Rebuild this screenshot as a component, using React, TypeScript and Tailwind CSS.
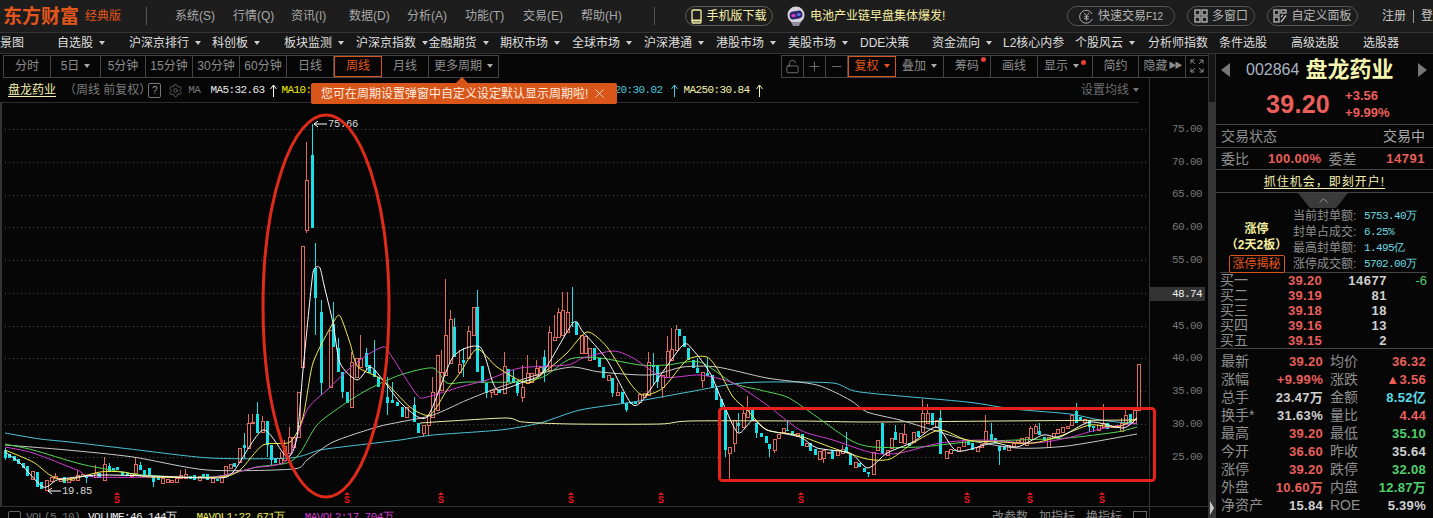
import React from "react";
import { LockOpen, Plus, Minus, Settings, ChevronUp, X } from "lucide-react";

type Candle = { x: number; t: number; b: number; h: number; l: number; up: boolean };

const r = (x: number, t: number, b: number, h = t, l = b): Candle => ({ x, t, b, h, l, up: true });
const c = (x: number, t: number, b: number, h = t, l = b): Candle => ({ x, t, b, h, l, up: false });

const candles: Candle[] = [
    c(5, 450, 458, 448, 460), c(9, 454, 458), c(14, 456, 461), c(18, 459, 464), c(23, 463, 468), c(27, 466, 476),
    r(32, 471, 479), c(37, 472, 487), c(41, 482, 489), r(46, 480, 490), r(51, 477, 481), r(55, 476, 478, 473),
    r(60, 478, 481), c(64, 477, 483), r(68, 478, 482), r(72, 478, 480), r(77, 475, 480, 470), r(82, 474, 476),
    c(86, 475, 478, 475, 483), c(91, 475, 477), r(95, 473, 477, 465), c(99, 473, 478), r(104, 464, 480, 457),
    c(109, 466, 472, 463), c(113, 468, 470), c(117, 467, 470), c(122, 472, 475), c(127, 473, 476), r(131, 473, 476),
    r(135, 464, 473, 457), c(140, 465, 470, 462), c(144, 470, 475), c(149, 468, 475), c(153, 476, 482, 476, 487),
    c(158, 477, 480), r(162, 478, 483), r(167, 479, 482), r(171, 480, 482), r(176, 478, 482), r(180, 475, 478, 470),
    r(185, 474, 478, 469), c(190, 476, 479), c(194, 475, 480), r(199, 476, 480), c(203, 474, 477), c(207, 474, 480),
    r(212, 478, 482), c(217, 479, 481), r(221, 477, 482),
    r(225, 466, 475), r(230, 464, 468), c(234, 463, 467), r(239, 448, 462), c(244, 445, 448, 433, 458),
    r(248, 423, 448, 414), r(252, 422, 423, 414), c(257, 414, 433, 402), r(262, 421, 432, 416), c(267, 421, 445, 421, 457),
    c(271, 445, 460, 445, 465), c(275, 458, 463), r(280, 458, 463, 452), r(284, 446, 460, 440), r(289, 437, 453, 427),
    r(293, 437, 447), r(298, 392, 437), r(302, 246, 367), r(306, 180, 230, 142, 233), c(312, 155, 228, 124),
    c(315, 268, 298, 243, 335), c(321, 312, 383, 300, 395), r(330, 330, 387), c(333, 324, 347, 302), c(338, 348, 372, 338),
    c(342, 372, 392, 372, 398), c(347, 392, 403), r(351, 362, 407, 352), r(356, 358, 377), r(360, 358, 367, 335),
    c(366, 353, 367, 348, 370), c(369, 365, 373), c(374, 370, 377, 340), c(378, 377, 387), c(387, 397, 403, 377, 415),
    c(392, 400, 403, 382), c(397, 402, 406), c(402, 407, 417), r(406, 407, 417), c(414, 405, 422, 397),
    c(418, 423, 433), r(423, 425, 433, 425, 437), r(428, 415, 425, 415, 436), r(432, 392, 417, 377), r(437, 355, 410),
    r(441, 372, 390, 350), r(445, 335, 375, 279), r(450, 319, 363, 310), c(454, 327, 357, 318), r(459, 364, 372, 350),
    c(463, 360, 363, 348, 377), r(468, 331, 358, 326), r(473, 307, 335), c(477, 307, 372, 290), c(482, 366, 383),
    c(486, 383, 393, 383, 398), r(491, 390, 392, 390, 398), r(495, 389, 394), c(499, 390, 393), r(504, 366, 393, 352),
    c(508, 369, 382), c(513, 378, 383, 370), c(517, 382, 393, 382, 396), r(522, 387, 397, 365, 402), r(527, 373, 383, 355),
    r(531, 373, 382), r(536, 368, 375, 360), r(540, 367, 372), c(544, 357, 373, 350, 382), r(549, 332, 370, 326),
    r(554, 337, 340, 315), r(558, 312, 337, 308), r(562, 310, 335, 292), r(567, 312, 332, 292), c(572, 322, 323, 287, 327),
    c(576, 322, 335), r(581, 335, 353), r(585, 336, 353), r(589, 348, 360), c(594, 348, 360), c(599, 358, 367),
    c(603, 367, 378), r(608, 375, 380), c(612, 378, 393, 378, 397), r(617, 392, 395, 383), c(622, 392, 403),
    c(626, 403, 410, 403, 412), c(631, 402, 404), c(635, 402, 404), r(639, 394, 402), r(644, 393, 397),
    r(648, 362, 395, 352), c(653, 365, 367, 353, 385), c(657, 365, 382, 365, 388), r(662, 375, 387, 375, 398),
    r(667, 351, 377, 336), r(671, 349, 360, 328), r(676, 329, 350, 325), c(679, 329, 336), c(684, 336, 347),
    c(688, 348, 360), c(693, 360, 368), c(697, 368, 373, 358), r(702, 372, 380, 372, 388), c(707, 373, 376, 358),
    c(712, 375, 388), c(716, 388, 400), c(721, 399, 407), c(725, 410, 450, 410, 457), r(729, 447, 453, 447, 480),
    r(734, 420, 443, 420, 452), c(738, 423, 426, 413, 432), r(743, 413, 427, 410), r(747, 410, 417, 396), c(752, 410, 420),
    c(756, 423, 433, 423, 438), c(761, 433, 437), c(766, 436, 443), c(769, 444, 449, 444, 457), r(774, 439, 450, 439, 453),
    r(778, 434, 438), r(783, 428, 432), c(787, 430, 431, 420), c(792, 431, 435), r(797, 433, 436), c(802, 434, 446),
    r(806, 443, 446), c(810, 443, 451), c(815, 449, 455), r(819, 451, 459), r(823, 450, 458, 450, 463), r(828, 452, 453),
    c(832, 450, 459), r(837, 450, 455), r(842, 449, 453, 445), c(846, 447, 453, 432), c(850, 454, 465), r(855, 462, 467),
    c(859, 463, 467), c(864, 468, 472), c(868, 472, 474, 472, 477), r(873, 452, 474), r(877, 440, 450), c(882, 423, 454),
    r(887, 450, 455), r(891, 438, 448), c(895, 432, 440, 425), r(900, 433, 442), r(904, 434, 443, 424), c(909, 443, 446),
    r(913, 432, 442), c(918, 431, 437), r(922, 413, 432, 399), r(927, 413, 423, 404), c(932, 413, 425), r(936, 420, 427),
    c(940, 418, 454, 410), r(946, 451, 458), r(950, 449, 453), c(954, 450, 451), r(958, 447, 451), r(963, 440, 446),
    c(968, 441, 445), c(972, 443, 450), r(977, 447, 451), r(981, 444, 447), r(985, 431, 442, 415), c(991, 434, 440, 423),
    c(995, 438, 443), c(999, 446, 451, 446, 465), c(1004, 446, 450), r(1008, 445, 450), r(1013, 443, 446), r(1017, 440, 443),
    r(1021, 438, 443), r(1026, 437, 445), r(1030, 428, 439, 426), r(1035, 426, 433, 424), c(1039, 431, 435, 423),
    c(1044, 437, 440), r(1048, 437, 447), r(1053, 433, 437), r(1057, 429, 433), r(1062, 427, 432), r(1067, 426, 428),
    r(1071, 415, 425), c(1076, 411, 423, 403), c(1080, 417, 420), r(1084, 419, 422), c(1089, 420, 427, 420, 432),
    c(1093, 426, 428, 426, 432), r(1098, 425, 430), r(1103, 423, 427, 404), c(1107, 423, 429), r(1112, 426, 427),
    r(1116, 425, 427), r(1121, 423, 431, 418), r(1125, 415, 423, 409), c(1130, 414, 423), r(1134, 410, 423), r(1138, 364, 410),
];

const ma5: [number, number][] = [
    [5, 452], [20, 463], [43, 487], [57, 480], [77, 477], [100, 475], [150, 476], [217, 478], [233, 472], [263, 430],
    [287, 457], [297, 437], [303, 370], [312, 280], [315, 268], [320, 268], [324, 285], [333, 323], [340, 363], [357, 380], [370, 367], [383, 380],
    [403, 405], [427, 417], [453, 357], [480, 347], [493, 383], [500, 390], [523, 382], [543, 372], [573, 323], [583, 332],
    [607, 360], [630, 402], [640, 403], [657, 380], [683, 345], [693, 350], [710, 373], [723, 403], [738, 433], [753, 420],
    [767, 430], [800, 437], [817, 448], [850, 453], [868, 468], [887, 453], [913, 442], [937, 427], [957, 451], [993, 443],
    [1017, 447], [1043, 435], [1060, 437], [1090, 422], [1123, 428], [1137, 418],
];
const ma10: [number, number][] = [
    [5, 450], [33, 462], [50, 475], [67, 480], [100, 472], [123, 472], [150, 477], [220, 477], [240, 470], [263, 445],
    [290, 442], [303, 417], [313, 363], [333, 323], [340, 316], [350, 343], [358, 367], [383, 380], [410, 407], [430, 415],
    [447, 390], [460, 373], [477, 349], [497, 367], [527, 383], [547, 370], [567, 353], [587, 332], [607, 347], [630, 383],
    [643, 395], [663, 388], [687, 360], [707, 357], [720, 373], [733, 397], [747, 410], [767, 430], [797, 435], [833, 448],
    [867, 459], [890, 459], [913, 443], [940, 430], [967, 440], [1000, 442], [1033, 443], [1060, 436], [1090, 425], [1117, 427],
    [1137, 418],
];
const ma20: [number, number][] = [
    [5, 447], [33, 453], [77, 470], [93, 477], [167, 477], [213, 477], [253, 468], [287, 460], [307, 410], [327, 390],
    [357, 362], [383, 347], [392, 357], [417, 395], [427, 397], [460, 387], [487, 380], [520, 368], [567, 365], [583, 358],
    [613, 351], [633, 358], [663, 377], [700, 375], [733, 383], [767, 405], [800, 430], [833, 440], [873, 453], [900, 453],
    [940, 443], [983, 440], [1033, 443], [1067, 438], [1100, 429], [1137, 423],
];
const ma30: [number, number][] = [
    [5, 444], [33, 450], [77, 463], [100, 468], [143, 475], [213, 477], [257, 467], [287, 463], [300, 453], [317, 425],
    [340, 407], [367, 390], [400, 375], [433, 368], [447, 383], [467, 382], [513, 382], [543, 377], [570, 359], [600, 358],
    [640, 365], [667, 365], [700, 362], [733, 383], [760, 390], [787, 397], [810, 412], [850, 440], [873, 447], [920, 447],
    [967, 442], [1017, 440], [1067, 438], [1117, 432], [1137, 427],
];
const ma60: [number, number][] = [
    [5, 445], [67, 450], [133, 457], [207, 470], [293, 469], [307, 460], [333, 442], [377, 427], [400, 422], [433, 415],
    [467, 400], [500, 387], [543, 373], [573, 367], [600, 372], [650, 375], [683, 367], [717, 367], [767, 378], [817, 385],
    [850, 400], [867, 412], [900, 420], [933, 430], [967, 440], [1017, 448], [1067, 446], [1137, 434],
];
const ma120: [number, number][] = [
    [420, 423], [450, 421], [507, 418], [523, 422], [573, 424], [660, 424], [690, 421], [800, 421],
    [867, 422], [1000, 421], [1137, 420],
];
const ma250: [number, number][] = [
    [5, 433], [40, 439], [70, 442], [130, 449], [210, 458], [290, 458], [320, 450], [350, 446], [400, 440], [433, 435],
    [500, 430], [540, 423], [580, 410], [633, 402], [683, 393], [733, 384], [767, 382], [833, 383], [860, 392], [967, 402],
    [1013, 409], [1070, 414], [1100, 420], [1137, 424],
];

// catmull-rom through the points, the MA lines in the picture are rounded
const smooth = (pts: [number, number][]) => {
    let d = `M${pts[0][0]} ${pts[0][1]}`;
    for (let i = 0; i < pts.length - 1; i++) {
        const p0 = pts[Math.max(i - 1, 0)];
        const p1 = pts[i];
        const p2 = pts[i + 1];
        const p3 = pts[Math.min(i + 2, pts.length - 1)];
        const c1 = [p1[0] + (p2[0] - p0[0]) / 8, p1[1] + (p2[1] - p0[1]) / 8];
        const c2 = [p2[0] - (p3[0] - p1[0]) / 8, p2[1] - (p3[1] - p1[1]) / 8];
        d += ` C${c1[0].toFixed(1)} ${c1[1].toFixed(1)} ${c2[0].toFixed(1)} ${c2[1].toFixed(1)} ${p2[0]} ${p2[1]}`;
    }
    return d;
};

const grid = [129, 162, 195, 227, 260, 293, 326, 358, 391, 424, 457];
const axis = ["75.00", "70.00", "65.00", "60.00", "55.00", "", "45.00", "40.00", "35.00", "30.00", "25.00"];
const signals = [117, 347, 441, 571, 661, 801, 967, 1030, 1102];

const mono = "font-['Liberation_Mono',monospace]";
const cjk = "font-['Liberation_Sans','Noto_Sans_CJK_SC',sans-serif]";
const arial = "font-['Liberation_Sans','Noto_Sans_CJK_SC',sans-serif]";

const Caret = ({ color = "border-t-[#aaaaaa]" }: { color?: string }) => (
    <span className={`inline-block w-0 h-0 border-x-[3px] border-t-[4px] border-x-transparent ${color}`} />
);

const navItems: [string, boolean, string][] = [
    ["自选股", true, "w-[72px]"], ["沪深京排行", true, "w-[83px]"], ["科创板", true, "w-[72px]"], ["板块监测", true, "w-[72px]"],
    ["沪深京指数", true, "w-[72.5px]"], ["金融期货", true, "w-[71.5px]"], ["期权市场", true, "w-[72px]"], ["全球市场", true, "w-[72px]"],
    ["沪深港通", true, "w-[72px]"], ["港股市场", true, "w-[72px]"], ["美股市场", true, "w-[72px]"], ["DDE决策", false, "w-[72px]"],
    ["资金流向", true, "w-[71px]"], ["L2核心内参", false, "w-[72px]"], ["个股风云", true, "w-[73px]"], ["分析师指数", false, "w-[71px]"],
    ["条件选股", false, "w-[72px]"], ["高级选股", false, "w-[72px]"], ["选股器", false, "w-[70px]"],
];

const menus = ["系统(S)", "行情(Q)", "资讯(I)", "数据(D)", "分析(A)", "功能(T)", "交易(E)", "帮助(H)"];

const Pill = ({ w, children }: { w: string; children: React.ReactNode }) => (
    <div className={`${w} shrink-0 h-[20px] flex items-center justify-center gap-1 rounded-full border border-[#555555] text-[#b5b5b5] text-[12px]`}>
        {children}
    </div>
);

const TopBar = () => (
    <div className="h-[32px] flex items-center bg-[#1d1d1d] pl-[3px] text-[12px] text-[#a8a8a8] shrink-0 overflow-hidden">
        <div className="w-[82px] shrink-0 text-[19px] font-bold text-[#e2561c] leading-none whitespace-nowrap">东方财富</div>
        <div className="w-[61px] shrink-0 text-[#e2561c] text-[12px] whitespace-nowrap">经典版</div>
        <div className="w-px h-[18px] shrink-0 bg-[#555555]" />
        <div className="flex shrink-0 ml-[28px]">
            {menus.map((m) => (
                <div key={m} className="w-[58px] whitespace-nowrap">{m}</div>
            ))}
        </div>
        <div className="w-px h-[18px] shrink-0 bg-[#555555] ml-[15px]" />
        <div className="ml-[30px] w-[88px] shrink-0 h-[20px] flex items-center justify-center gap-1 rounded-full border border-[#5e5e50] text-[#f5efa8]">
            <svg width="11" height="15" viewBox="0 0 11 15" fill="none" stroke="#f5efa8" strokeWidth="1.3">
                <rect x="1" y="1" width="9" height="13" rx="1" />
                <path d="M1 11.5 H10" strokeWidth="2" />
            </svg>
            <span className="whitespace-nowrap">手机版下载</span>
        </div>
        <svg className="ml-[13px] shrink-0" width="20" height="20" viewBox="0 0 20 20">
            <circle cx="10" cy="9" r="8.5" fill="#d6d2dc" />
            <rect x="3.5" y="5" width="13" height="8" rx="4" fill="#2c2470" transform="rotate(-10 10 9)" />
            <ellipse cx="7.5" cy="9.6" rx="2.2" ry="1.6" fill="#d83fb8" />
            <ellipse cx="12.8" cy="8.6" rx="1.9" ry="1.4" fill="#5a7cf0" />
            <path d="M5 16 L15 16 L13 20 L7 20 Z" fill="#8f8a9c" />
        </svg>
        <div className="ml-[4px] w-[257px] shrink-0 text-[#f5eda0] whitespace-nowrap">电池产业链早盘集体爆发!</div>
        <Pill w="w-[108px]">
            <svg width="15" height="15" viewBox="0 0 15 15" fill="none" stroke="#aaaaaa">
                <path d="M13 5 A6.5 6.5 0 1 0 13.2 10" />
                <path d="M5 4 L7.5 7 L10 4 M7.5 7 V11.5 M5.2 7.8 H9.8 M5.2 9.8 H9.8" />
            </svg>
            <span className="whitespace-nowrap">快速交易<span className="text-[10px]">F12</span></span>
        </Pill>
        <div className="ml-[12px] shrink-0">
            <Pill w="w-[68px]">
                <svg width="14" height="14" viewBox="0 0 14 14" fill="none" stroke="#bbbbbb" strokeWidth="1.3">
                    <rect x="1" y="1" width="5" height="5" />
                    <rect x="8" y="1" width="5" height="5" />
                    <rect x="1" y="8" width="5" height="5" />
                    <rect x="8" y="8" width="5" height="5" />
                </svg>
                <span className="whitespace-nowrap">多窗口</span>
            </Pill>
        </div>
        <div className="ml-[12px] shrink-0">
            <Pill w="w-[91px]">
                <svg width="14" height="14" viewBox="0 0 14 14" fill="none" stroke="#bbbbbb" strokeWidth="1.3">
                    <rect x="1" y="1" width="5" height="5" />
                    <rect x="8" y="1" width="5" height="3" />
                    <rect x="1" y="8" width="5" height="5" />
                    <path d="M8 13 L13 6.5 M8 8 L10 6" />
                </svg>
                <span className="whitespace-nowrap">自定义面板</span>
            </Pill>
        </div>
        <div className="ml-[24px] shrink-0 text-[#c8c8c8] whitespace-nowrap">注册</div>
        <div className="ml-[7px] shrink-0 w-px h-[13px] bg-[#999999]" />
        <div className="ml-[7px] shrink-0 text-[#c8c8c8] whitespace-nowrap">登录</div>
    </div>
);

const NavBar = () => (
    <div className="h-[22px] flex items-center bg-[#171717] border-y border-[#333333] text-[12px] text-[#dddddd] shrink-0 overflow-hidden">
        <div className="w-[57px] shrink-0 whitespace-nowrap">景图</div>
        {navItems.map(([label, caret, w]) => (
            <div key={label} className={`${w} shrink-0 flex items-center gap-[6px] whitespace-nowrap`}>
                <span>{label}</span>
                {caret && <Caret color="border-t-[#cccccc]" />}
            </div>
        ))}
    </div>
);

const periods: [string, string, boolean?][] = [
    ["分时", "w-[47px]"], ["5日", "w-[50px]", true], ["5分钟", "w-[45px]"], ["15分钟", "w-[47px]"], ["30分钟", "w-[47px]"],
    ["60分钟", "w-[47px]"], ["日线", "w-[47px]"],
];

const Cell = ({ w, children, active }: { w: string; children?: React.ReactNode; active?: boolean }) => (
    <div
        className={`${w} h-full shrink-0 flex items-center justify-center gap-[5px] whitespace-nowrap border-r ${
            active ? "border border-[#d9561a] text-[#e2561c]" : "border-[#444444]"
        }`}
    >
        {children}
    </div>
);

const ToolRow = () => (
    <div className="h-[24px] flex items-center pl-[3px] text-[12px] text-[#8d8d8d] shrink-0">
        <div className="flex h-[23px] border border-[#444444]">
            {periods.map(([label, w, caret]) => (
                <Cell key={label} w={w}>
                    {label}
                    {caret && <Caret />}
                </Cell>
            ))}
            <Cell w="w-[48px]" active>周线</Cell>
            <Cell w="w-[47px]">月线</Cell>
            <div className="w-[69px] flex items-center justify-center gap-[5px] whitespace-nowrap">
                更多周期
                <Caret />
            </div>
        </div>
        <div className="flex h-[23px] border border-[#444444] ml-[282px]">
            <Cell w="w-[22px]"><LockOpen size={15} strokeWidth={1.2} /></Cell>
            <Cell w="w-[22px]"><Plus size={15} strokeWidth={1.2} /></Cell>
            <Cell w="w-[22px]"><Minus size={15} strokeWidth={1.2} /></Cell>
            <Cell w="w-[48px]" active>复权<Caret color="border-t-[#e2561c]" /></Cell>
            <Cell w="w-[48px]">叠加<Caret /></Cell>
            <Cell w="w-[47px]">
                <span className="relative">
                    筹码
                    <span className="absolute -right-[7px] top-[0px] w-[5px] h-[5px] rounded-full bg-[#e8403a]" />
                </span>
            </Cell>
            <Cell w="w-[47px]">画线</Cell>
            <Cell w="w-[55px]">
                显示
                <Caret />
                <span className="w-[5px] h-[5px] -mt-[8px] -ml-[3px] rounded-full bg-[#e8403a]" />
            </Cell>
            <Cell w="w-[46px]">简约</Cell>
            <Cell w="w-[47px]">
                隐藏
                <span className="text-[8px] -ml-[4px] tracking-[-2px]">▶▶</span>
            </Cell>
            <div className="w-[22px] flex items-center justify-center">
                <svg width="14" height="14" viewBox="0 0 14 14" fill="none" stroke="#8d8d8d">
                    <path d="M1 4.5 V1 H4.5 M9.5 1 H13 V4.5 M13 9.5 V13 H9.5 M4.5 13 H1 V9.5 M1 1 L5 5 M13 1 L9 5 M13 13 L9 9 M1 13 L5 9" />
                </svg>
            </div>
        </div>
    </div>
);

const UpArrow = ({ color }: { color: string }) => (
    <svg width="7" height="13" viewBox="0 0 7 13" fill="none" stroke={color}>
        <path d="M3.5 13 V1 M0.5 5 L3.5 1 L6.5 5" />
    </svg>
);

const InfoRow = () => (
    <div className="relative h-[25px] flex items-center pl-[8px] border-b border-[#2e2e2e] mr-[10px] text-[11px] shrink-0">
        <span className="text-[12px] text-[#f3efb0] underline underline-offset-2 whitespace-nowrap">盘龙药业</span>
        <span className="ml-[8px] text-[12px] text-[#7a7a7a] whitespace-nowrap">（周线 前复权）</span>
        <span className="ml-[-3px] w-[13px] h-[15px] flex items-center justify-center border border-[#777777] rounded-[2px] text-[#999999] text-[10px]">?</span>
        <Settings className="ml-[7px] text-[#666666]" size={15} strokeWidth={1.4} />
        <span className={`ml-[5px] text-[#777777] ${mono} tracking-[-0.6px]`}>MA</span>
        <span className={`ml-[10px] mr-[4px] text-[#e8e8e8] whitespace-nowrap ${mono} tracking-[-0.6px]`}>MA5:32.63</span>
        <span className="ml-[2px]"><UpArrow color="#ffffff" /></span>
        <span className={`ml-[4px] text-[#f0f000] whitespace-nowrap ${mono} tracking-[-0.6px]`}>MA10:</span>
        <span className={`ml-[303px] text-[#4cc8dc] whitespace-nowrap ${mono} tracking-[-0.6px]`}>20:30.02</span>
        <span className="ml-[9px]"><UpArrow color="#4cc8dc" /></span>
        <span className={`ml-[5px] text-[#f5f0b0] whitespace-nowrap ${mono} tracking-[-0.6px]`}>MA250:30.84</span>
        <span className="ml-[7px]"><UpArrow color="#f5f0b0" /></span>
        <span className="ml-auto flex items-center gap-[4px] text-[12px] text-[#6e6e6e] whitespace-nowrap">
            设置均线
            <Caret color="border-t-[#777777]" />
        </span>
        {/* orange hint bubble, lies over the MA values */}
        <div className="absolute left-[311px] top-[5px] h-[21px] w-[306px] flex items-center pl-[10px] gap-[4px] bg-[#d9561a] rounded-[2px] text-[12px] text-[#fdeee0] whitespace-nowrap z-10">
            <span className="absolute left-[145px] -top-[6px] w-0 h-0 border-x-[6px] border-b-[6px] border-x-transparent border-b-[#d9561a]" />
            您可在周期设置弹窗中自定义设定默认显示周期啦!
            <X size={15} strokeWidth={1.3} />
        </div>
    </div>
);

const Chart = () => (
    <svg width="1149" height="403" viewBox="0 103 1149 403" className="block shrink-0 overflow-visible relative z-10">
        <line x1="1" x2="1" y1="103" y2="506" stroke="#333333" strokeWidth="2" />
        {grid.map((y) => (
            <line key={y} x1="5" x2="1147" y1={y + 0.5} y2={y + 0.5} stroke="#4a4a4a" strokeDasharray="1 3" />
        ))}
        <g shapeRendering="crispEdges">
            {candles.map((k) =>
                k.up ? (
                    <g key={k.x} stroke="#e06a5c" fill="#060606">
                        <line x1={k.x + 0.5} x2={k.x + 0.5} y1={k.h} y2={k.l} />
                        <rect x={k.x - 1} y={k.t + 0.5} width="3" height={Math.max(k.b - k.t, 1)} />
                    </g>
                ) : (
                    <g key={k.x} stroke="#18e0e6" fill="#18e0e6">
                        <line x1={k.x + 0.5} x2={k.x + 0.5} y1={k.h} y2={k.l} />
                        <rect x={k.x - 1} y={k.t} width="3" height={Math.max(k.b - k.t, 1)} stroke="none" />
                    </g>
                ),
            )}
        </g>
        <g fill="none" strokeWidth="1" strokeLinejoin="round">
            <path d={smooth(ma250)} stroke="#4cc3d8" />
            <path d={smooth(ma120)} stroke="#f5f2a8" />
            <path d={smooth(ma60)} stroke="#c9c9c9" />
            <path d={smooth(ma30)} stroke="#55d655" />
            <path d={smooth(ma20)} stroke="#d23cd2" />
            <path d={smooth(ma10)} stroke="#f0ee50" />
            <path d={smooth(ma5)} stroke="#ffffff" />
        </g>
        {signals.map((x) => (
            <g key={x} fill="#e01818">
                <path d={`M${x - 3} 495 L${x} 492 L${x + 3} 495 Z`} />
                <text x={x} y="503" textAnchor="middle" fontSize="10" fontWeight="700" fontFamily="Liberation Mono, monospace">S</text>
            </g>
        ))}
        <g stroke="#ffffff" fill="none">
            <path d="M327 124 H314 M318 121 L314 124 L318 127" />
            <path d="M61 491 H48 M52 488 L48 491 L52 494" />
        </g>
        <text x="328" y="127" fill="#d8d8d8" fontSize="10.5" fontFamily="Liberation Mono, monospace" letterSpacing="-0.3">75.66</text>
        <text x="62" y="494" fill="#d8d8d8" fontSize="10.5" fontFamily="Liberation Mono, monospace" letterSpacing="-0.3">19.85</text>
        <ellipse cx="326" cy="306" rx="63" ry="191" fill="none" stroke="#e02a1a" strokeWidth="3" />
        <rect x="719.5" y="408.5" width="435" height="72" rx="3" fill="none" stroke="#e8221a" strokeWidth="3" />
    </svg>
);

const PriceAxis = () => (
    <div className="w-[59px] shrink-0 border-l border-[#333333] pt-[34.6px] relative flex flex-col">
        {axis.map((v, i) => (
            <div key={i} className={`h-[32.8px] shrink-0 flex items-center pl-[22px] text-[11px] text-[#777777] ${mono} tracking-[-0.6px]`}>
                {v}
            </div>
        ))}
        <div className={`absolute left-0 top-[209px] w-[55px] h-[14px] bg-[#333333] flex items-center pl-[22px] text-[11px] text-[#eeeeee] ${mono} tracking-[-0.6px]`}>
            48.74
        </div>
        <div className="mt-auto h-[12px] border-t border-[#333333]" />
    </div>
);

const BottomRow = () => (
    <div className={`h-[12px] shrink-0 flex items-start pl-[8px] pt-[4px] border-t border-[#333333] text-[11px] leading-[13px] whitespace-nowrap ${mono} tracking-[-0.6px]`}>
        <span className="w-[13px] h-[13px] border border-[#666666] rounded-[2px]" />
        <span className="ml-[5px] text-[#777777]">VOL(5,10)</span>
        <span className="ml-[8px] text-[#eeeeee]">VOLUME:46.144万</span>
        <span className="ml-[20px] text-[#f0ee50]">MAVOL1:22.671万</span>
        <span className="ml-[20px] text-[#d23cd2]">MAVOL2:17.704万</span>
        <span className={`ml-auto mr-[2px] flex gap-[11px] text-[#8a8a8a] text-[12px] tracking-normal ${cjk}`}>
            <span>改参数</span>
            <span>加指标</span>
            <span>换指标</span>
            <span className="w-[14px] h-[13px] border border-[#666666]" />
        </span>
    </div>
);

const RED = "text-[#ea5f5a]";
const GREEN = "text-[#4fd06c]";
const WHITE = "text-[#cfcfcf]";
const CYAN = "text-[#5cdbe8]";

const orders: [string, string, string, string?][] = [
    ["买一", "39.20", "14677", "-6"],
    ["买二", "39.19", "81"],
    ["买三", "39.18", "18"],
    ["买四", "39.16", "13"],
    ["买五", "39.15", "2"],
];

const stats: [string, string, string, string, string, string][] = [
    ["最新", "39.20", RED, "均价", "36.32", RED],
    ["涨幅", "+9.99%", RED, "涨跌", "▲3.56", RED],
    ["总手", "23.47万", WHITE, "金额", "8.52亿", CYAN],
    ["换手*", "31.63%", WHITE, "量比", "4.44", RED],
    ["最高", "39.20", RED, "最低", "35.10", GREEN],
    ["今开", "36.60", RED, "昨收", "35.64", WHITE],
    ["涨停", "39.20", RED, "跌停", "32.08", GREEN],
    ["外盘", "10.60万", RED, "内盘", "12.87万", GREEN],
    ["净资产", "15.84", WHITE, "ROE", "5.39%", WHITE],
];

const sealRows = [
    ["当前封单额:", "5753.40万"],
    ["封单占成交:", "6.25%"],
    ["最高封单额:", "1.495亿"],
    ["涨停成交额:", "5702.00万"],
];

const QuotePanel = () => (
    <div className="w-[217px] shrink-0 bg-[#060606] text-[13px] text-[#8f8f8f]">
        <div className="h-[71px] border-b border-[#444444] px-[5px]">
            <div className="h-[32px] flex items-center">
                <span className="w-0 h-0 border-y-[7px] border-r-[9px] border-y-transparent border-r-[#777777]" />
                <span className={`ml-[16px] text-[16px] text-[#a8b4c4] ${arial}`}>002864</span>
                <span className="ml-[6px] text-[22px] leading-none font-bold text-[#f5f5b0] whitespace-nowrap">盘龙药业</span>
                <span className="ml-auto mr-[1px] w-0 h-0 border-y-[7px] border-l-[9px] border-y-transparent border-l-[#777777]" />
            </div>
            <div className="flex items-center mt-[1px]">
                <span className={`ml-[45px] text-[25px] leading-none font-bold tracking-[0.3px] ${RED} ${arial}`}>39.20</span>
                <div className={`ml-[15px] text-[13px] leading-[17px] font-bold ${RED} ${arial}`}>
                    <div>+3.56</div>
                    <div>+9.99%</div>
                </div>
            </div>
        </div>
        <div className="h-[23px] pt-[1px] flex items-center justify-between px-[5px] pr-[8px] border-b border-[#444444] text-[14px]">
            <span>交易状态</span>
            <span className="text-[#aaaaaa]">交易中</span>
        </div>
        <div className="h-[22px] pt-[1px] flex items-center px-[5px] pr-[8px] border-b border-[#444444] text-[14px]">
            <span>委比</span>
            <span className={`ml-[19px] text-[13px] font-bold tracking-[0.3px] ${RED} ${arial}`}>100.00%</span>
            <span className="ml-[7px]">委差</span>
            <span className={`ml-auto text-[13px] font-bold tracking-[0.5px] ${RED} ${arial}`}>14791</span>
        </div>
        <div className="h-[23px] pt-[1px] flex items-center justify-center border-b border-[#444444] text-[12px] text-[#f5f0b0] underline underline-offset-2 tracking-[1px] whitespace-nowrap">
            抓住机会，即刻开户!
        </div>
        <div className="relative h-[79px] flex">
            <div className="absolute left-[82px] top-0 w-[50px] h-[15px] bg-[#3a3a3a] [clip-path:polygon(0_0,100%_0,76%_100%,24%_100%)] flex justify-center text-[#999999]">
                <ChevronUp size={15} strokeWidth={1.5} />
            </div>
            <div className="w-[73px] shrink-0 ml-[4px] pt-[28px] flex flex-col items-center">
                <div className="text-[12px] font-bold text-[#f5f0a0] leading-[16px] whitespace-nowrap">涨停</div>
                <div className="text-[12px] font-bold text-[#f5f0a0] leading-[16px] whitespace-nowrap">（2天2板）</div>
                <div className="mt-[2px] w-[56px] h-[18px] flex items-center justify-center border border-[#d9561a] rounded-[2px] text-[12px] text-[#e2561c] whitespace-nowrap">涨停揭秘</div>
            </div>
            <div className="pt-[15px] text-[12px]">
                {sealRows.map(([k, v]) => (
                    <div key={k} className="h-[16px] flex items-center whitespace-nowrap">
                        <span className="w-[71px] text-[#8f8f8f]">{k}</span>
                        <span className={`text-[#6fd8e0] ${mono} text-[11px] tracking-[-0.6px]`}>{v}</span>
                    </div>
                ))}
            </div>
        </div>
        <div className="ml-[4px] mr-[6px] border-t border-[#444444]">
            {orders.map(([k, p, v, d]) => (
                <div key={k} className="h-[15px] flex items-center text-[14px] leading-[15px]">
                    <span className="w-[34px] whitespace-nowrap">{k}</span>
                    <span className={`w-[68px] text-right text-[13px] font-bold tracking-[0.3px] ${RED} ${arial}`}>{p}</span>
                    <span className={`w-[65px] text-right text-[13px] font-bold tracking-[0.5px] ${WHITE} ${arial}`}>{v}</span>
                    <span className={`flex-1 text-right text-[13px] ${GREEN} ${arial}`}>{d}</span>
                </div>
            ))}
        </div>
        <div className="border-t border-[#444444] pl-[5px] pt-[4px]">
            {stats.map(([a, av, ac, b, bv, bc]) => (
                <div key={a} className="h-[17.9px] grid grid-cols-[102px_96px] gap-x-[7px] items-center text-[14px] leading-[17px] whitespace-nowrap">
                    <div className="flex justify-between">
                        <span>{a}</span>
                        <span className={`text-[13px] font-bold tracking-[0.3px] ${ac} ${arial}`}>{av}</span>
                    </div>
                    <div className="flex justify-between">
                        <span>{b}</span>
                        <span className={`text-[13px] font-bold tracking-[0.3px] ${bc} ${arial}`}>{bv}</span>
                    </div>
                </div>
            ))}
        </div>
    </div>
);

// strip between the chart and the quote panel, with the collapse handle at its foot
const Splitter = () => (
    <div className="w-[8px] shrink-0 flex flex-col">
        <div className="h-[48px] bg-[#141414] border-x border-[#333333]" />
        <div className="relative flex-1 bg-[#353535]">
            <span className="absolute left-[2px] bottom-[3px] w-0 h-0 border-y-[7px] border-l-[4px] border-y-transparent border-l-[#cccccc]" />
        </div>
    </div>
);

export default function App() {
    return (
        <div className={`w-[1433px] h-[518px] overflow-hidden flex flex-col bg-[#060606] ${cjk}`}>
            <TopBar />
            <NavBar />
            <div className="flex flex-1 min-h-0">
                <div className="w-[1208px] shrink-0 flex flex-col">
                    <ToolRow />
                    <div className="flex flex-1 min-h-0">
                        <div className="w-[1149px] shrink-0 flex flex-col">
                            <InfoRow />
                            <Chart />
                            <BottomRow />
                        </div>
                        <PriceAxis />
                    </div>
                </div>
                <Splitter />
                <QuotePanel />
            </div>
        </div>
    );
}
